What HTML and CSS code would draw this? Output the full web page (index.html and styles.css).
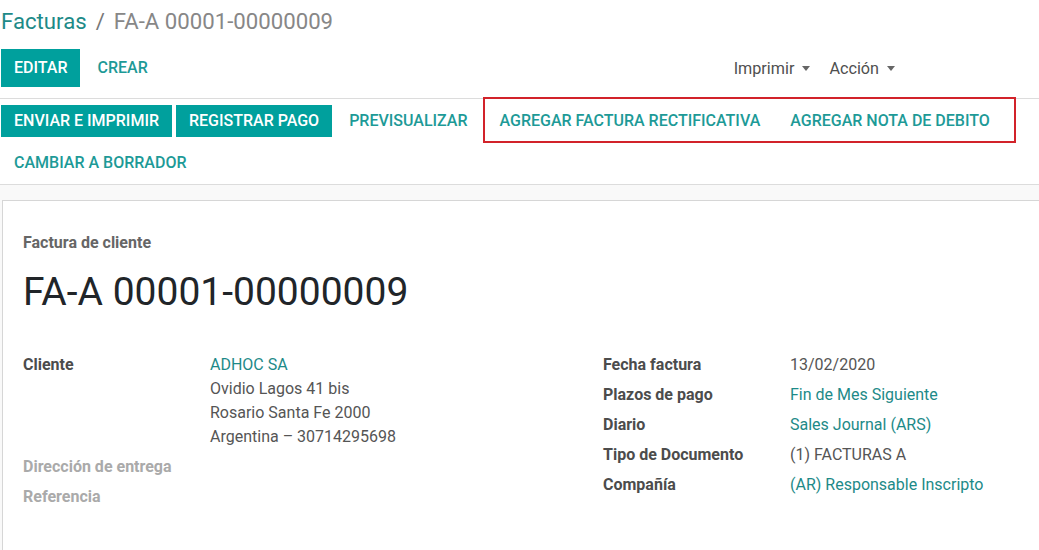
FILE: index.html
```html
<!DOCTYPE html>
<html lang="es">
<head>
<meta charset="utf-8">
<title>FA-A 00001-00000009</title>
<link rel="stylesheet" href="styles.css">
</head>
<body>
<div class="control-panel">
  <ol class="breadcrumb">
    <li class="crumb"><a href="#">Facturas</a></li>
    <li class="crumb sep">/</li>
    <li class="crumb active">FA-A 00001-00000009</li>
  </ol>
  <div class="cp-bottom">
    <div class="cp-buttons">
      <button class="btn btn-primary">Editar</button>
      <button class="btn btn-link">Crear</button>
    </div>
    <div class="cp-sidebar">
      <button class="dropdown">Imprimir <span class="caret"></span></button>
      <button class="dropdown">Acción <span class="caret"></span></button>
    </div>
  </div>
</div>
<div class="statusbar">
  <div class="status-buttons">
    <button class="btn btn-primary btn-sm">Enviar e imprimir</button>
    <button class="btn btn-primary btn-sm">Registrar pago</button>
    <button class="btn btn-link btn-sm">Previsualizar</button>
    <div class="highlight">
      <button class="btn btn-link btn-sm">Agregar factura rectificativa</button>
      <button class="btn btn-link btn-sm">Agregar nota de debito</button>
    </div>
    <button class="btn btn-link btn-sm">Cambiar a borrador</button>
  </div>
</div>
<div class="sheet-bg">
  <div class="sheet">
    <div class="subtitle">Factura de cliente</div>
    <h1 class="title">FA-A 00001-00000009</h1>
    <div class="groups">
      <div class="group">
        <div class="label">Cliente</div>
        <div class="value">
          <a href="#">ADHOC SA</a><br>
          Ovidio Lagos 41 bis<br>
          Rosario Santa Fe 2000<br>
          Argentina – 30714295698
        </div>
        <div class="label muted">Dirección de entrega</div>
        <div class="value"></div>
        <div class="label muted">Referencia</div>
        <div class="value"></div>
      </div>
      <div class="group">
        <div class="label">Fecha factura</div>
        <div class="value">13/02/2020</div>
        <div class="label">Plazos de pago</div>
        <div class="value"><a href="#">Fin de Mes Siguiente</a></div>
        <div class="label">Diario</div>
        <div class="value"><a href="#">Sales Journal (ARS)</a></div>
        <div class="label">Tipo de Documento</div>
        <div class="value">(1) FACTURAS A</div>
        <div class="label">Compañía</div>
        <div class="value"><a href="#">(AR) Responsable Inscripto</a></div>
      </div>
    </div>
  </div>
</div>
</body>
</html>
```

FILE: styles.css
```css
* { box-sizing: border-box; }
html, body {
  margin: 0;
  background: #fff;
  font-family: Roboto, "Liberation Sans", sans-serif;
  font-size: 16px;
  color: #4c4c4c;
  overflow: hidden;
}
a { color: #1d8a88; text-decoration: none; }

.control-panel {
  padding: 5px 0 0 0;
  border-bottom: 1px solid #dcdcdc;
}
.breadcrumb {
  list-style: none;
  margin: 0;
  padding: 0 0 0 1px;
  display: flex;
  font-size: 22.2px;
  line-height: 32px;
  height: 32px;
}
.crumb a { color: #1d8a88; }
.crumb.sep { color: #777; margin: 0 9px 0 9px; }
.crumb.active { color: #878787; }

.cp-bottom {
  display: flex;
  justify-content: space-between;
  align-items: center;
  margin-top: 12px;
  padding-bottom: 11px;
}
.cp-buttons { display: flex; align-items: center; gap: 4px; padding-left: 1px; }

.btn {
  font-family: inherit;
  font-weight: 500;
  text-transform: uppercase;
  font-size: 16px;
  border: 0;
  background: none;
  padding: 0 13px;
  height: 38px;
  line-height: 38px;
  cursor: pointer;
  white-space: nowrap;
}
.btn-primary { background: #00a09d; color: #fff; }
.btn-link { color: #1d9a97; }
.btn-sm { height: 32px; line-height: 32px; }

.cp-sidebar { display: flex; gap: 19px; padding-right: 144px; }
.dropdown {
  font-family: inherit;
  font-size: 16.2px;
  color: #4f4f4f;
  background: none;
  border: 0;
  padding: 0;
  display: flex;
  align-items: center;
  gap: 8px;
}
.caret {
  width: 0; height: 0;
  border-left: 4.5px solid transparent;
  border-right: 4.5px solid transparent;
  border-top: 5px solid #666;
}

.statusbar {
  border-bottom: 1px solid #dcdcdc;
  padding: 6px 0 5px 1px;
}
.status-buttons {
  display: flex;
  flex-wrap: wrap;
  row-gap: 10px;
  column-gap: 4px;
}
.status-buttons .btn-link { padding: 0 13px; }
.highlight {
  display: flex;
  gap: 0;
  border: 2px solid #d2232a;
  margin: -8px 0 -6px -2px;
  padding: 6px 9px 4px 0;
}
.status-buttons .highlight .btn-link { padding: 0 15px; }

.sheet-bg {
  background: #f9f9f9;
  padding: 15px 0 0 2px;
  height: 400px;
}
.sheet {
  background: #fff;
  border-left: 1px solid #d6d6d6;
  border-top: 1px solid #d6d6d6;
  height: 100%;
  padding: 31px 0 0 20px;
}
.subtitle {
  font-weight: bold;
  font-size: 16px;
  line-height: 22px;
  color: #666;
}
.title {
  font-weight: 400;
  font-size: 39px;
  line-height: 48px;
  margin: 14px 0 34px 0;
  color: #212529;
}
.groups {
  display: grid;
  grid-template-columns: 580px 1fr;
}
.group {
  display: grid;
  grid-template-columns: 187px 1fr;
  align-content: start;
}
.label, .value {
  font-size: 16px;
  line-height: 24px;
  padding: 3px 0;
}
.label { font-weight: bold; color: #4c4c4c; }
.label.muted { color: #aaaaaa; }
.value { color: #555; }
.value a { color: #1d8a88; }
```
